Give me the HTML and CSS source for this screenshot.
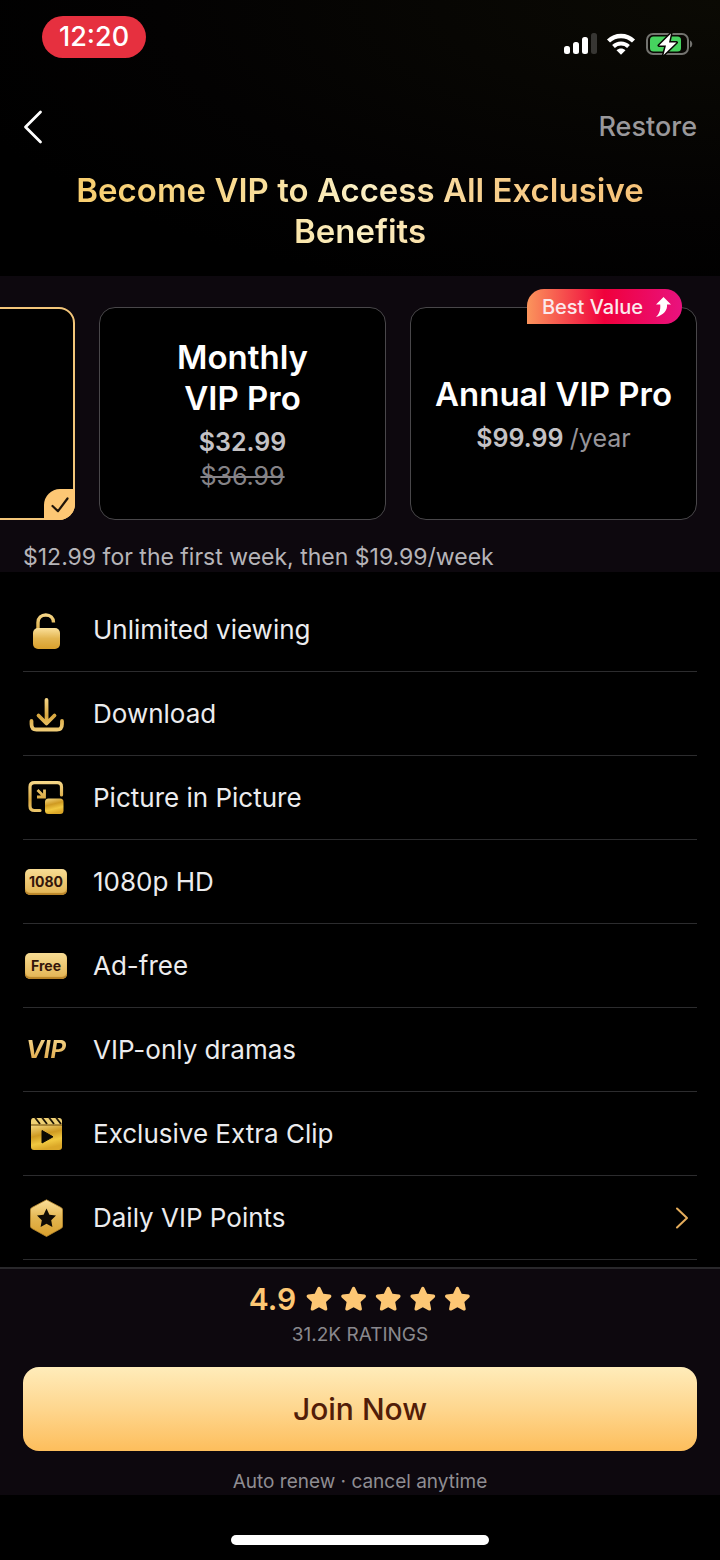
FILE: index.html
```html
<!DOCTYPE html>
<html lang="en">
<head>
<meta charset="utf-8">
<meta name="viewport" content="width=device-width, initial-scale=1">
<title>VIP</title>
<link rel="stylesheet" href="styles.css">
</head>
<body>
<svg class="defs" width="0" height="0" aria-hidden="true">
  <defs>
    <linearGradient id="gold" x1="0" y1="0" x2="0" y2="1">
      <stop offset="0" stop-color="#fbe09a"/>
      <stop offset="0.5" stop-color="#e3b550"/>
      <stop offset="1" stop-color="#d9a02c"/>
    </linearGradient>
    <linearGradient id="goldLine" gradientUnits="userSpaceOnUse" x1="0" y1="3" x2="0" y2="37">
      <stop offset="0" stop-color="#f7d98c"/>
      <stop offset="0.55" stop-color="#d9a83f"/>
      <stop offset="1" stop-color="#f0cd78"/>
    </linearGradient>
    <linearGradient id="goldShine" x1="0" y1="0" x2="0.3" y2="1">
      <stop offset="0" stop-color="#f6d983"/>
      <stop offset="0.45" stop-color="#cf9a22"/>
      <stop offset="0.75" stop-color="#f1c840"/>
      <stop offset="1" stop-color="#dba728"/>
    </linearGradient>
    <path id="star" d="M13 .8c.7 0 1.200.4 1.500 1l2.800 5.900 6.700.9c1.400.2 1.900 1.900.9 2.800l-4.900 4.600 1.300 6.700c.3 1.400-1.100 2.300-2.300 1.700L13 21.300l-6 3.100c-1.200.6-2.600-.3-2.300-1.700L6 16 1.100 11.400c-1-.9-.5-2.600.9-2.800l6.700-.9 2.800-5.900c.3-.6.800-1 1.500-1z"/>
  </defs>
</svg>

<header class="top">
  <div class="status">
    <span class="clock">12:20</span>
    <div class="signals" aria-hidden="true">
      <svg width="34" height="22" viewBox="0 0 34 22">
        <g fill="#fff"><rect x="1" y="13" width="6" height="8" rx="2.500"/><rect x="10" y="9" width="6" height="12" rx="2.500"/><rect x="19" y="4" width="6" height="17" rx="2.500"/></g>
        <rect x="28" y="0" width="6" height="21" rx="2.500" fill="#373633"/>
      </svg>
      <svg width="30" height="22" viewBox="0 0 30 22">
        <path d="M2.500 8C9.500 1.300 20.500 1.300 27.500 8" fill="none" stroke="#fff" stroke-width="4.400"/>
        <path d="M7.500 13.500c4.200-4 10.800-4 15 0" fill="none" stroke="#fff" stroke-width="4"/>
        <path d="M10.500 17.200c2.700-2.300 6.300-2.300 9 0L15 21.800z" fill="#fff"/>
      </svg>
      <svg width="48" height="24" viewBox="0 0 48 24">
        <rect x="2" y="2" width="41" height="20" rx="6" fill="none" stroke="#73736f" stroke-width="2"/>
        <path d="M45 8.500c3 1 3 6 0 7z" fill="#73736f"/>
        <rect x="5" y="4.500" width="31" height="15" rx="3.500" fill="#46d35f"/>
        <path d="M26 1.500 14 13.500h7L18.500 23 31.500 10.500h-7.500z" fill="#fff" stroke="#080703" stroke-width="3" paint-order="stroke" stroke-linejoin="round"/>
      </svg>
    </div>
  </div>
  <nav class="nav">
    <button class="back" type="button" aria-label="Back">
      <svg width="20" height="34" viewBox="0 0 20 34" fill="none" stroke="#fff" stroke-width="2.800" stroke-linecap="round" stroke-linejoin="round"><path d="M17.500 2 2.500 17l15 15"/></svg>
    </button>
    <button class="restore" type="button">Restore</button>
  </nav>
  <h1 class="title"><span class="title-text">Become VIP to Access All Exclusive Benefits</span></h1>
</header>

<section class="plans">
  <div class="plan-row">
    <label class="plan">
      <input class="plan-input" type="radio" name="plan" checked aria-labelledby="plan-note">
      <span class="plan-check" aria-hidden="true">
        <svg width="18" height="16" viewBox="0 0 18 16" fill="none" stroke="#20150a" stroke-width="2.200" stroke-linecap="round" stroke-linejoin="round"><path d="M1.500 9 7 14.200 16.500 1.500"/></svg>
      </span>
    </label>
    <label class="plan">
      <input class="plan-input" type="radio" name="plan">
      <span class="plan-name">Monthly<br>VIP Pro</span>
      <span class="plan-price">$32.99</span>
      <s class="plan-old">$36.99</s>
    </label>
    <label class="plan">
      <input class="plan-input" type="radio" name="plan">
      <span class="plan-name">Annual VIP Pro</span>
      <span class="plan-price">$99.99 <span class="plan-period">/year</span></span>
      <span class="plan-badge">Best Value
        <svg width="18" height="22" viewBox="0 0 18 22" fill="#fff" aria-hidden="true"><path d="M9.500 1 17 8.500h-4c.6 6-3.400 10.500-11 12.500 3.400-3.400 4.700-7 4.200-12.500H2z"/></svg>
      </span>
    </label>
  </div>
  <p class="plan-note" id="plan-note">$12.99 for the first week, then $19.99/week</p>
</section>

<main class="benefits">
  <ul class="list">
    <li class="item">
      <svg class="icon" width="46" height="40" viewBox="0 0 46 40">
        <path d="M15 19v-6.500c0-4.500 3.400-7.500 7.800-7.500s7.700 3 7.700 7.500" fill="none" stroke="url(#goldLine)" stroke-width="3.400"/>
        <rect x="10" y="18" width="27" height="21" rx="5" fill="url(#gold)"/>
      </svg>
      <span>Unlimited viewing</span>
    </li>
    <li class="item">
      <svg class="icon" width="46" height="40" viewBox="0 0 46 40" fill="none" stroke="url(#goldLine)" stroke-width="3.800" stroke-linecap="round" stroke-linejoin="round">
        <path d="M23.500 6 23.600 28M15.500 21.500l8 8 8-8M8.500 27v3c0 4 1.500 5.500 5 5.500h20.500c3.500 0 5-1.500 5-5.500v-3"/>
      </svg>
      <span>Download</span>
    </li>
    <li class="item">
      <svg class="icon" width="46" height="40" viewBox="0 0 46 40">
        <path d="M38.500 17V9c0-3-1.200-4.300-4.200-4.300H11.500C8.500 4.700 7 6 7 9v19c0 3 1.500 4.500 4.500 4.500H17" fill="none" stroke="url(#goldLine)" stroke-width="3.200" stroke-linecap="round"/>
        <path d="M14.500 12l6 6M21.500 11.500v7.500H14" fill="none" stroke="url(#goldLine)" stroke-width="2.800"/>
        <rect x="22" y="20.500" width="18.500" height="15.500" rx="3.500" fill="url(#goldShine)"/>
      </svg>
      <span>Picture in Picture</span>
    </li>
    <li class="item">
      <span class="tag">1080</span>
      <span>1080p HD</span>
    </li>
    <li class="item">
      <span class="tag">Free</span>
      <span>Ad-free</span>
    </li>
    <li class="item">
      <span class="vip">VIP</span>
      <span>VIP-only dramas</span>
    </li>
    <li class="item">
      <svg class="icon" width="46" height="40" viewBox="0 0 46 40">
        <path d="M10 4h26c1.800 0 3 1 3 3v4H8V7c0-2 1-3 2-3z" fill="#efd074"/>
        <path d="M12 3.500 17 10M19 3.500 24 10M26 3.500 31 10M33 3.500 38 10" stroke="#1c1406" stroke-width="1.800"/>
        <path d="M8 11h31v22c0 2-1 3-3 3H11c-2 0-3-1-3-3z" fill="url(#goldShine)"/>
        <path d="M8 11h31" stroke="#7b5a17" stroke-width="1.200"/>
        <path d="M19 16.500 30 22.800 19 29z" fill="#0c0903" stroke="#0c0903" stroke-linejoin="round"/>
      </svg>
      <span>Exclusive Extra Clip</span>
    </li>
    <li class="item">
      <svg class="icon" width="46" height="40" viewBox="0 0 46 40">
        <path d="M23.500 1.800 38 9.500c1 .6 1.500 1.300 1.500 2.500v16c0 1.200-.5 2-1.500 2.500L23.500 38.500 9 30.500c-1-.6-1.500-1.300-1.500-2.500V12c0-1.200.5-1.900 1.500-2.500z" fill="url(#gold)" stroke="#b98a30" stroke-width=".8" stroke-linejoin="round"/>
        <path d="M23.500 10.500 26.400 16.800 33 17.600 28.200 22.200 29.400 29 23.500 25.700 17.600 29 18.800 22.200 14 17.600 20.600 16.800z" fill="#0f0b04"/>
      </svg>
      <a class="item-link" href="#points">Daily VIP Points
        <svg width="14" height="24" viewBox="0 0 14 24" fill="none" stroke="#e5ad5c" stroke-width="2" stroke-linecap="round" stroke-linejoin="round" aria-hidden="true"><path d="M2 2.500 12 12 2 21.500"/></svg>
      </a>
    </li>
  </ul>
</main>

<footer class="footer">
  <div class="rating">
    <span>4.9</span>
    <svg class="stars" width="165" height="26" viewBox="0 0 165 26" fill="#fdc774" role="img" aria-label="5 stars">
      <use href="#star"/><use href="#star" x="34.600"/><use href="#star" x="69.200"/><use href="#star" x="103.800"/><use href="#star" x="138.400"/>
    </svg>
  </div>
  <p class="ratings-count">31.2K RATINGS</p>
  <button class="join" type="button">Join Now</button>
  <p class="renew">Auto renew · cancel anytime</p>
</footer>
<div class="home-bar" aria-hidden="true"></div>
</body>
</html>
```

FILE: styles.css
```css
* {
  box-sizing: border-box;
}

body {
  margin: 0;
  min-height: 100vh;
  display: flex;
  flex-direction: column;
  background: #000;
  color: #ececee;
  font-family: Inter, "Liberation Sans", sans-serif;
  font-size: 26px;
  line-height: 32px;
}

button {
  padding: 0;
  border: 0;
  background: none;
  color: inherit;
  font: inherit;
  cursor: pointer;
}

p,
h1,
ul {
  margin: 0;
  padding: 0;
}

.defs {
  position: absolute;
}

.top {
  padding: 16px 23px 24px;
  background: radial-gradient(ellipse at 100% 0, #0b0a04 0, #030202 55%, #000 80%);
}

.status {
  display: flex;
  justify-content: space-between;
  align-items: center;
  height: 42px;
  padding-left: 19px;
  padding-right: 4px;
}

.clock {
  padding: 0 17px;
  border-radius: 21px;
  background: #e6303f;
  color: #fff;
  font-size: 27px;
  font-weight: 500;
  line-height: 42px;
}

.signals {
  display: flex;
  align-items: center;
  gap: 9px;
  padding-top: 14px;
}

.nav {
  display: flex;
  justify-content: space-between;
  align-items: center;
  padding: 52px 0 26px;
}

.back {
  display: flex;
}

.restore {
  color: #9a989b;
  font-size: 27px;
  font-weight: 500;
}

.title {
  padding: 0 40px;
  font-size: 33px;
  font-weight: 600;
  line-height: 41px;
  text-align: center;
}

.title-text {
  display: block;
  background: linear-gradient(90deg, #f8cd6c 0%, #f9d98d 28%, #fbf0c4 50%, #f8cf8c 72%, #f6c176 100%);
  -webkit-background-clip: text;
  background-clip: text;
  color: transparent;
}

.plans {
  padding-top: 31px;
  background: #0d080e;
}

.plan-row {
  display: flex;
  justify-content: flex-end;
  gap: 24px;
  padding-right: 23px;
}

.plan {
  position: relative;
  display: flex;
  flex: 0 0 287px;
  flex-direction: column;
  justify-content: center;
  align-items: center;
  height: 213px;
  padding-top: 2px;
  text-align: center;
}

.plan-input {
  position: absolute;
  inset: 0;
  margin: 0;
  appearance: none;
  border: 1px solid #49474a;
  border-radius: 16px;
  background: #000;
}

.plan-input:checked {
  border: 2px solid #f3c67a;
}

.plan-name,
.plan-price,
.plan-old {
  position: relative;
}

.plan-name {
  color: #fff;
  font-size: 33px;
  font-weight: 600;
  line-height: 41px;
  white-space: nowrap;
}

.plan-price {
  padding-top: 6px;
  color: #c4c2c5;
  font-size: 25px;
  font-weight: 600;
  line-height: 34px;
}

.plan-period {
  color: #97959a;
  font-weight: 400;
}

.plan-old {
  color: #858387;
  font-size: 25px;
  line-height: 34px;
}

.plan-check {
  position: absolute;
  right: 0;
  bottom: 0;
  display: flex;
  justify-content: center;
  align-items: center;
  width: 31px;
  height: 31px;
  border-radius: 16px 0 16px 0;
  background: #fdc774;
}

.plan-badge {
  position: absolute;
  top: -18px;
  right: 15px;
  display: flex;
  align-items: center;
  gap: 11px;
  height: 35px;
  padding: 0 10px 0 15px;
  border-radius: 17px 17px 17px 0;
  background: linear-gradient(90deg, #fb955c 0%, #f0003c 50%, #e9127f 100%);
  color: #fbe9ec;
  font-size: 20px;
  font-weight: 500;
  white-space: nowrap;
}

.plan-note {
  padding: 22px 23px 0;
  color: #b6b4b8;
  font-size: 23px;
  line-height: 30px;
}

.benefits {
  padding: 16px 23px 7px;
}

.list {
  list-style: none;
}

.item {
  display: flex;
  align-items: center;
  gap: 24px;
  height: 84px;
  border-bottom: 1px solid #2c2c2e;
}

.icon {
  flex: none;
}

.tag,
.vip {
  flex: none;
  width: 42px;
  margin: 0 2px;
  text-align: center;
}

.tag {
  height: 26px;
  border-radius: 5px;
  background: linear-gradient(180deg, #f7dc94, #e2b352);
  box-shadow: inset 0 -2px 1px #b98429;
  color: #33150a;
  font-size: 14px;
  font-weight: 700;
  line-height: 25px;
}

.vip {
  background: linear-gradient(180deg, #f9dc94, #d99f3d);
  -webkit-background-clip: text;
  background-clip: text;
  color: transparent;
  font-size: 24px;
  font-style: italic;
  font-weight: 700;
}

.item-link {
  display: flex;
  flex: 1;
  justify-content: space-between;
  align-items: center;
  padding-right: 8px;
  color: inherit;
  text-decoration: none;
}

.footer {
  display: flex;
  flex-direction: column;
  align-items: center;
  padding: 14px 23px 0;
  border-top: 2px solid #29282b;
  background: #0d080e;
}

.rating {
  display: flex;
  align-items: center;
  gap: 10px;
  color: #fdc774;
  font-size: 30px;
  font-weight: 600;
}

.ratings-count {
  padding: 8px 0 20px;
  color: #8a888d;
  font-size: 19px;
  line-height: 24px;
}

.join {
  align-self: stretch;
  height: 84px;
  border-radius: 16px;
  background: linear-gradient(180deg, #ffecba 0%, #fed68e 50%, #fdbe5c 100%);
  color: #521d08;
  font-size: 30px;
  font-weight: 500;
}

.renew {
  padding: 19px 0 1px;
  color: #8f8d92;
  font-size: 19px;
  line-height: 24px;
}

.home-bar {
  width: 258px;
  height: 10px;
  margin: auto auto 15px;
  border-radius: 5px;
  background: #fff;
}
```
